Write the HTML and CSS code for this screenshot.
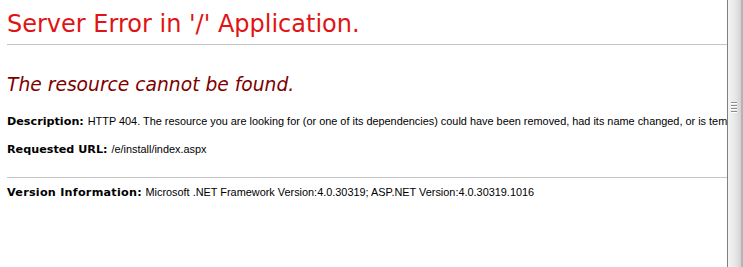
FILE: index.html
```html
<!DOCTYPE html>
<html lang="en">
<head>
  <meta charset="UTF-8" />
  <title>The resource cannot be found.</title>
  <link rel="stylesheet" href="styles.css">
</head>
<body>
  <div class="page">
    <h1>Server Error in '/' Application.</h1>
    <hr>
    <h2><i>The resource cannot be found.</i></h2>
    <p class="line first"><b>Description: </b><span class="arial">HTTP 404. The resource you are looking for (or one of its dependencies) could have been removed, had its name changed, or is temporarily unavailable. &nbsp;Please review the following URL and make sure that it is spelled correctly.</span></p>
    <p class="line"><b>Requested URL: </b><span class="arial">/e/install/index.aspx</span></p>
    <hr class="sep">
    <p class="line version"><b>Version Information:</b>&nbsp;<span class="arial">Microsoft .NET Framework Version:4.0.30319; ASP.NET Version:4.0.30319.1016</span></p>
  </div>
  <div class="scrollbar">
    <div class="grip">
      <span></span><span></span><span></span><span></span>
    </div>
  </div>
</body>
</html>
```

FILE: styles.css
```css
html, body {
  height: 100%;
}
body {
  margin: 0;
  display: flex;
  overflow: hidden;
  background: #fff;
  font-family: "DejaVu Sans", Verdana, sans-serif;
  font-size: 11.2px;
  color: #000;
}
.page {
  flex: 1;
  min-width: 0;
  overflow: hidden;
  padding-left: 7px;
}
h1 {
  margin: 10px 0 0;
  font-size: 24px;
  line-height: 28px;
  font-weight: normal;
  color: #e01414;
  white-space: nowrap;
}
hr {
  margin: 6px 0 0;
  height: 0;
  border: 0;
  border-top: 1px solid #c4c4c4;
}
h2 {
  margin: 29px 0 0;
  font-size: 18.7px;
  line-height: 22px;
  font-weight: normal;
  color: #7d0000;
  white-space: nowrap;
}
.line {
  margin: 13px 0 0;
  line-height: 15px;
  white-space: nowrap;
}
.line.first {
  margin-top: 18px;
}
.arial {
  font-family: "Liberation Sans", Arial, sans-serif;
  font-size: 10.9px;
}
hr.sep {
  margin-top: 20px;
}
.page .version {
  margin-top: 7px;
}
.version b {
  letter-spacing: 0.25px;
}
.scrollbar {
  width: 16px;
  flex: none;
  box-sizing: border-box;
  border-left: 1px solid #7f7f7f;
  border-right: 2px solid #b4b4b4;
  background: linear-gradient(to right, #f4f4f4, #e6e6e6 60%, #d2d2d2);
  display: flex;
  flex-direction: column;
  align-items: center;
  padding-top: 102px;
}
.grip {
  display: flex;
  flex-direction: column;
  gap: 1px;
  margin-left: -2px;
}
.grip span {
  display: block;
  width: 6px;
  height: 1px;
  background: #8c8c8c;
  border-bottom: 1px solid #fff;
}
```
